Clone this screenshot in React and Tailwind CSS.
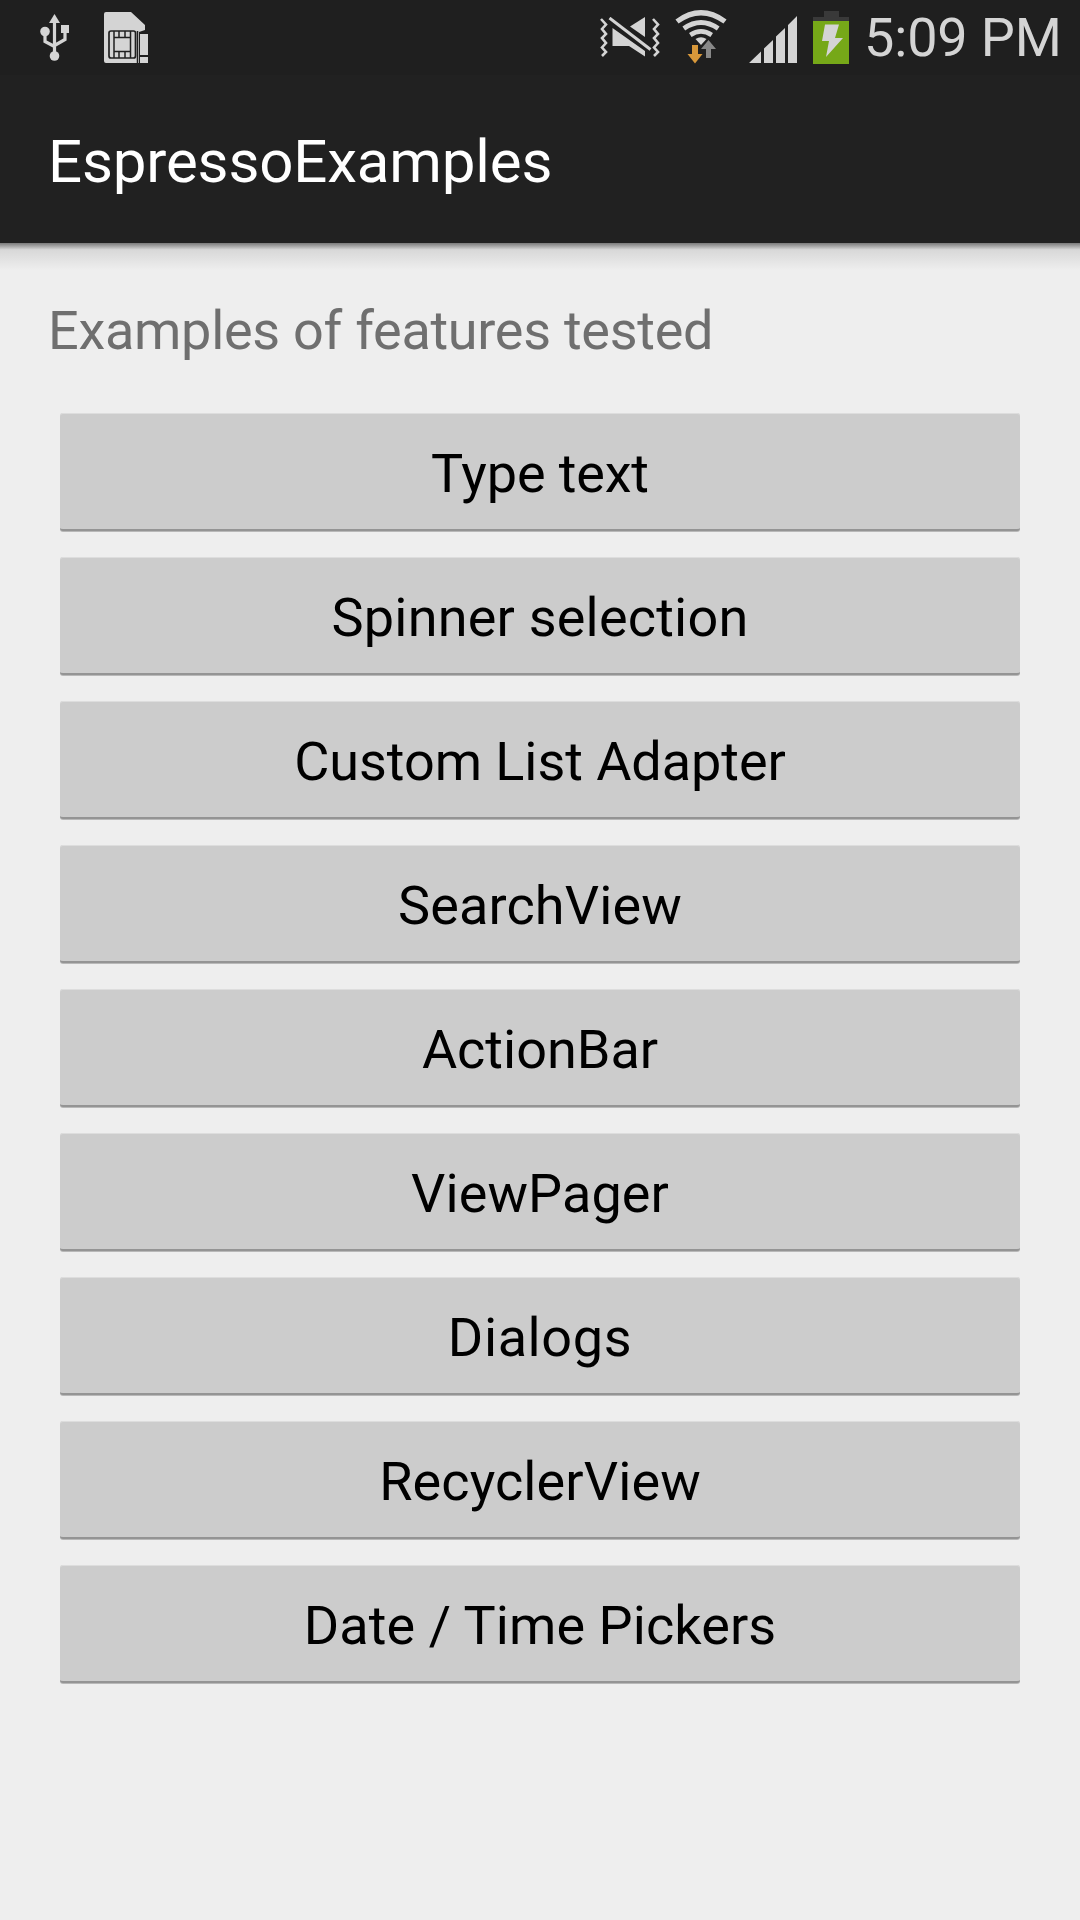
const examples = [
  { label: "Type text", spacing: "tracking-[-0.13px]" },
  { label: "Spinner selection", spacing: "tracking-[0.2px]" },
  { label: "Custom List Adapter", spacing: "tracking-[-0.06px]" },
  { label: "SearchView", spacing: "tracking-[0.13px]" },
  { label: "ActionBar", spacing: "tracking-[0px]" },
  { label: "ViewPager", spacing: "tracking-[0.1px]" },
  { label: "Dialogs", spacing: "tracking-[0.6px]" },
  { label: "RecyclerView", spacing: "tracking-[0.1px]" },
  { label: "Date / Time Pickers", spacing: "tracking-[0.08px]" },
];

function UsbIcon() {
  return (
    <svg width="30" height="48" viewBox="0 0 30 48" className="shrink-0">
      <g fill="none" stroke="#d4d4d4" strokeWidth="3.2">
        <path d="M14.5 8V42M5 18V27.5L14.5 32.500M25 16V25.5L14.5 31.5" />
      </g>
      <g fill="#d4d4d4">
        <path d="M14.5 0L20 9H9Z" />
        <circle cx="5" cy="17.5" r="4.8" />
        <rect x="21" y="11" width="8" height="8" />
        <circle cx="14.5" cy="42" r="4.8" />
      </g>
    </svg>
  );
}

function SimAlertIcon() {
  return (
    <svg width="46" height="54" viewBox="0 0 46 54" className="shrink-0">
      <path d="M2 1H27L41 14V19L35 21V52H2Q0 52 0 50V3Q0 1 2 1Z" fill="#d4d4d4" />
      <rect x="5" y="20" width="26.5" height="27" rx="2" fill="none" stroke="#1f1f1f" strokeWidth="1.7" />
      <g stroke="#1f1f1f" strokeWidth="1.5" fill="none">
        <path d="M10 20V47M26.5 20V47M10 26.5H26.5M10 40.5H26.5M15 20V26.5M21 20V26.5M15 40.5V47M21 40.5V47" />
      </g>
      <path d="M33.5 20V53" stroke="#1f1f1f" strokeWidth="1.5" />
      <path d="M36 23H44V44H36ZM36 46H44V52H36Z" fill="#d4d4d4" />
    </svg>
  );
}

function VibrateOffIcon() {
  return (
    <svg width="60" height="40" viewBox="0 0 60 40" className="shrink-0">
      <g fill="#d4d4d4">
        <path d="M12.500 11L45 34V39.500L29 29H12.500Z" />
        <path d="M45 0V20L30 9.500Z" />
      </g>
      <g fill="none" stroke="#d4d4d4" strokeWidth="3">
        <path d="M9.500 1L50.500 32.500" />
        <path d="M1 2L6 7.500L2 12L6 17L2 21L6 26L2 30.500L6 35L2 39" strokeWidth="2.600" />
        <path d="M53 2L58 7.500L54 12L58 17L54 21L58 26L54 30.500L58 35L54 39" strokeWidth="2.600" />
      </g>
    </svg>
  );
}

function WifiIcon() {
  return (
    <svg width="52" height="54" viewBox="0 0 52 54" className="shrink-0">
      <g fill="none" stroke="#d4d4d4" strokeWidth="5.2">
        <path d="M2 11.500Q26 -6 50 11.500" />
        <path d="M8.800 18.500Q26 6.500 43.200 18.500" strokeWidth="4.800" />
        <path d="M15.300 25Q26 17.800 36.700 25" strokeWidth="4.600" />
      </g>
      <path d="M20.500 29Q26 25.500 31.500 29L26 35Z" fill="#d4d4d4" />
      <path d="M17 35H23V44H27.500L20 53.500L12.500 44H17Z" fill="#d8983a" />
      <path d="M33.500 30L41 39H36V48H31V39H26Z" fill="#888888" />
    </svg>
  );
}

function SignalIcon() {
  return (
    <svg width="48" height="47" viewBox="0 0 48 47" className="shrink-0" fill="#d4d4d4">
      <path d="M0 47L12 35.500V47ZM15 47V32.500L24 24V47ZM27 47V20.500L36 12V47ZM39 47V9L48 0V47Z" />
    </svg>
  );
}

function BatteryIcon() {
  return (
    <svg width="36" height="53" viewBox="0 0 36 53" className="shrink-0">
      <path d="M11 0H26V6H36V10H0V6H11Z" fill="#393939" />
      <rect y="10" width="36" height="43" fill="#76a818" />
      <path d="M12 13.500H26L22 27H30L13 46L16 30H9Z" fill="#d4d4d4" />
    </svg>
  );
}

function StatusBar() {
  return (
    <div className="flex h-[75px] items-start bg-[#1f1f1f] pl-10">
      <div className="pt-3.5"><UsbIcon /></div>
      <div className="ml-[34px] pt-[11px]"><SimAlertIcon /></div>
      <div className="ml-auto pt-[17px]"><VibrateOffIcon /></div>
      <div className="ml-[15px] pt-2.5"><WifiIcon /></div>
      <div className="ml-[22px] pt-4"><SignalIcon /></div>
      <div className="ml-4 pt-[11px]"><BatteryIcon /></div>
      <div className="ml-[15px] w-[216px] whitespace-nowrap pt-[6px] text-[54px] leading-[64px] tracking-[-0.15px] text-[#d4d4d4]">5:09 PM</div>
    </div>
  );
}

export default function App() {
  return (
    <div className="flex h-[1920px] w-[1080px] flex-col overflow-hidden bg-[#eeeeee] font-[Roboto,sans-serif]">
      <StatusBar />
      <header className="flex h-42 items-center bg-[#212121] pl-12 pt-1.5">
        <h1 className="whitespace-nowrap text-[60px] leading-[70px] tracking-[-0.15px] text-white">EspressoExamples</h1>
      </header>
      <div className="h-[27px] shrink-0 bg-linear-to-b from-[#7a7a7a] via-[#d8d8d8] via-25% to-[#eeeeee]" />
      <main className="flex flex-col">
        <p className="h-[143px] whitespace-nowrap pl-12 pt-[29px] text-[54px] leading-[64px] tracking-[-0.28px] text-[#6f6f6f]">Examples of features tested</p>
        <div className="flex flex-col gap-[26px] px-15">
          {examples.map(({ label, spacing }) => (
            <button
              key={label}
              className="flex h-[118px] items-center justify-center rounded-[3px] border-b-2 border-[#949494] bg-[#cccccc] pt-1.5 text-[54px] leading-[64px] text-black shadow-[inset_0_1px_0_#dddddd,0_1px_0_#b8b8b8]"
            >
              <span className={spacing}>{label}</span>
            </button>
          ))}
        </div>
      </main>
    </div>
  );
}
